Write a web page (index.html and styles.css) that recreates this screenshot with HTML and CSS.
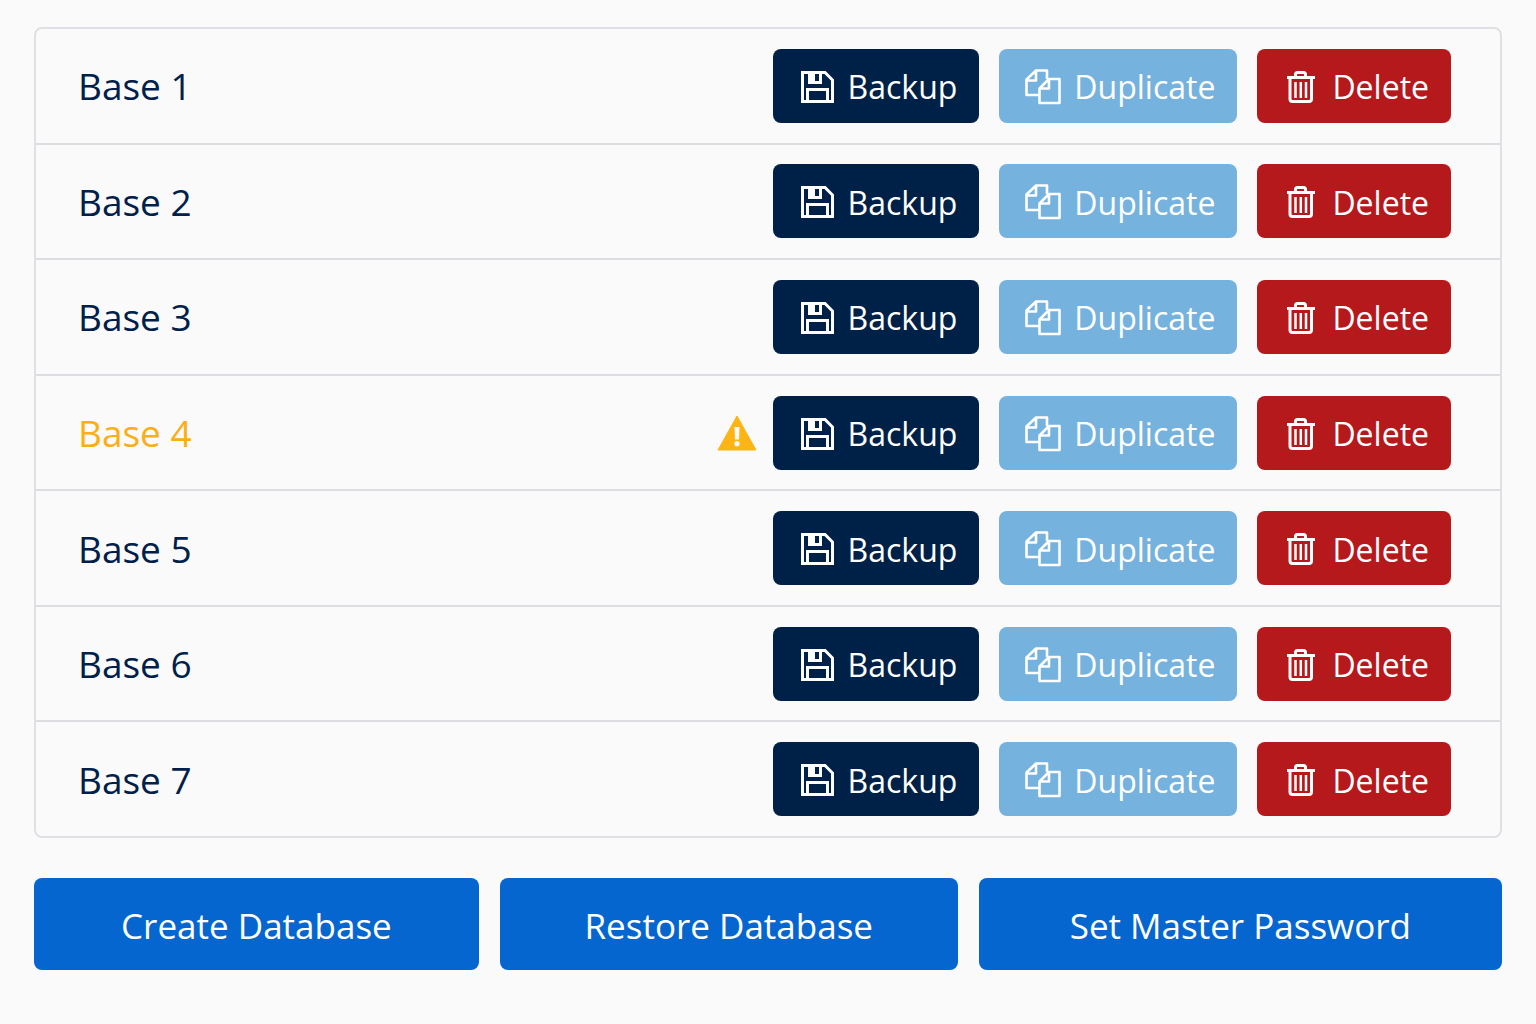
FILE: index.html
```html
<!DOCTYPE html>
<html lang="en">
<head>
    <meta charset="UTF-8">
    <meta name="viewport" content="width=device-width, initial-scale=1.0">
    <title>Databases</title>
    <link rel="stylesheet" href="styles.css">
</head>
<body>
    <svg class="sprite" aria-hidden="true">
        <symbol id="icon-backup" viewBox="0 0 36 36">
            <path d="M3.500 3.500H26L33.500 11V32.500H3.500Z" fill="none" stroke="currentColor" stroke-width="3"/>
            <path d="M8.500 32V20.500H28.500V32" fill="none" stroke="currentColor" stroke-width="3"/>
            <path d="M9 3H23V15H9ZM16 5V12H20V5Z" fill="currentColor" fill-rule="evenodd"/>
        </symbol>
        <symbol id="icon-duplicate" viewBox="0 0 36 36">
            <path d="M14.500 26H1.500V10.500L11 1.500H22V10M11 2V11.500H1.500" fill="none" stroke="currentColor" stroke-width="2.600" stroke-linejoin="round"/>
            <path d="M24 10H34.500V34H14.500V19.500ZM24 10V19.500H14.500" fill="none" stroke="currentColor" stroke-width="2.600" stroke-linejoin="round"/>
        </symbol>
        <symbol id="icon-delete" viewBox="0 0 36 36">
            <path d="M4 8.500H32M12.500 8V5.500Q12.500 3.500 14.500 3.500H20.500Q22.500 3.500 22.500 5.500V8M7 9V30Q7 32.500 9.500 32.500H26Q28.500 32.500 28.500 30V9" fill="none" stroke="currentColor" stroke-width="3"/>
            <path d="M12.500 13V29M17.800 13V29M23 13V29" fill="none" stroke="currentColor" stroke-width="2.500"/>
        </symbol>
    </svg>

    <main class="container">
        <ul class="list">
            <li class="row">
                <span class="name">Base 1</span>
                <button class="btn backup"><svg class="icon"><use href="#icon-backup"/></svg>Backup</button>
                <button class="btn duplicate"><svg class="icon"><use href="#icon-duplicate"/></svg>Duplicate</button>
                <button class="btn delete"><svg class="icon"><use href="#icon-delete"/></svg>Delete</button>
            </li>
            <li class="row">
                <span class="name">Base 2</span>
                <button class="btn backup"><svg class="icon"><use href="#icon-backup"/></svg>Backup</button>
                <button class="btn duplicate"><svg class="icon"><use href="#icon-duplicate"/></svg>Duplicate</button>
                <button class="btn delete"><svg class="icon"><use href="#icon-delete"/></svg>Delete</button>
            </li>
            <li class="row">
                <span class="name">Base 3</span>
                <button class="btn backup"><svg class="icon"><use href="#icon-backup"/></svg>Backup</button>
                <button class="btn duplicate"><svg class="icon"><use href="#icon-duplicate"/></svg>Duplicate</button>
                <button class="btn delete"><svg class="icon"><use href="#icon-delete"/></svg>Delete</button>
            </li>
            <li class="row warning">
                <span class="name">Base 4</span>
                <svg class="alert" viewBox="0 0 40 36" role="img" aria-label="Warning">
                    <path d="M20 1L39 35H1Z" fill="currentColor" stroke="currentColor" stroke-width="1" stroke-linejoin="round"/>
                    <path d="M17.500 12H22.500L22 24.500H18Z" fill="#fafafa"/>
                    <circle cx="20" cy="28.700" r="2.600" fill="#fafafa"/>
                </svg>
                <button class="btn backup"><svg class="icon"><use href="#icon-backup"/></svg>Backup</button>
                <button class="btn duplicate"><svg class="icon"><use href="#icon-duplicate"/></svg>Duplicate</button>
                <button class="btn delete"><svg class="icon"><use href="#icon-delete"/></svg>Delete</button>
            </li>
            <li class="row">
                <span class="name">Base 5</span>
                <button class="btn backup"><svg class="icon"><use href="#icon-backup"/></svg>Backup</button>
                <button class="btn duplicate"><svg class="icon"><use href="#icon-duplicate"/></svg>Duplicate</button>
                <button class="btn delete"><svg class="icon"><use href="#icon-delete"/></svg>Delete</button>
            </li>
            <li class="row">
                <span class="name">Base 6</span>
                <button class="btn backup"><svg class="icon"><use href="#icon-backup"/></svg>Backup</button>
                <button class="btn duplicate"><svg class="icon"><use href="#icon-duplicate"/></svg>Duplicate</button>
                <button class="btn delete"><svg class="icon"><use href="#icon-delete"/></svg>Delete</button>
            </li>
            <li class="row">
                <span class="name">Base 7</span>
                <button class="btn backup"><svg class="icon"><use href="#icon-backup"/></svg>Backup</button>
                <button class="btn duplicate"><svg class="icon"><use href="#icon-duplicate"/></svg>Duplicate</button>
                <button class="btn delete"><svg class="icon"><use href="#icon-delete"/></svg>Delete</button>
            </li>
        </ul>

        <div class="actions">
            <button class="action">Create Database</button>
            <button class="action">Restore Database</button>
            <button class="action">Set Master Password</button>
        </div>
    </main>
</body>
</html>
```
FILE: styles.css
```css
* {
    box-sizing: border-box;
}

body {
    margin: 0;
    background-color: #fafafa;
    color: #00204a;
    font-family: "Segoe UI", "Open Sans", "Noto Sans", sans-serif;
}

.sprite {
    display: none;
}

.container {
    display: flex;
    flex-direction: column;
    gap: 40px;
    min-height: 100vh;
    padding: 27px 34px 54px;
}

.list {
    display: flex;
    flex: 1;
    flex-direction: column;
    margin: 0;
    padding: 0;
    list-style: none;
    border: 2px solid #dee0e3;
    border-radius: 8px;
}

.row {
    display: flex;
    flex: 1;
    align-items: center;
    gap: 20px;
    padding: 0 49px 0 42px;
    border-bottom: 2px solid #dbdde0;
}

.row:last-child {
    border-bottom: none;
}

.name {
    flex: 1;
    font-size: 37px;
}

.warning .name {
    color: #fbaf17;
}

.alert {
    width: 40px;
    height: 36px;
    margin-right: -4px;
    color: #fdb515;
}

.btn {
    display: flex;
    align-items: center;
    gap: 13px;
    height: 74px;
    padding: 2px 22px 0 26px;
    border: none;
    border-radius: 8px;
    color: #fff;
    font-family: inherit;
    font-size: 32px;
    cursor: pointer;
}

.icon {
    width: 36px;
    height: 36px;
}

.backup {
    background-color: #002147;
}

.duplicate {
    background-color: #76b2de;
}

.delete {
    background-color: #b5191c;
}

.actions {
    display: grid;
    grid-template-columns: 34fr 35fr 40fr;
    gap: 21px;
}

.action {
    height: 92px;
    padding: 2px 20px 0;
    border: none;
    border-radius: 8px;
    background-color: #0666d0;
    color: #fff;
    font-family: inherit;
    font-size: 35px;
    cursor: pointer;
}
```
